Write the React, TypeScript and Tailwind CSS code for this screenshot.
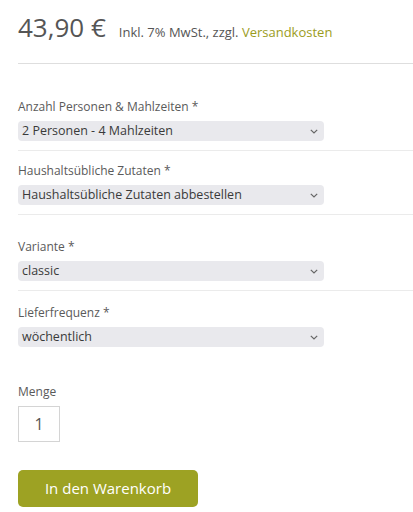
import React from "react";

type FieldProps = {
  label: string;
  value: string;
  pt: string;
  divider?: boolean;
};

const Chevron = () => (
  <svg width="8" height="5" viewBox="0 0 8 5" fill="none" className="shrink-0">
    <path d="M0.8 0.8l3.2 3.2 3.2-3.2" stroke="#666" strokeWidth="1.2" />
  </svg>
);

const SelectField = ({ label, value, pt, divider = true }: FieldProps) => {
  return (
    <div className={`${pt} ${divider ? "border-b border-[#ebebeb] pb-[9px]" : ""}`}>
      <div className="text-[12px] leading-[16px] text-[#5a5a5a]">{label}</div>
      <div className="mt-[6px] flex h-[20px] w-[306px] items-center justify-between rounded-[4px] bg-[#e9e9ed] pl-[4px] pr-[6px] text-[12.5px] text-[#3a3a3a]">
        <span>{value}</span>
        <Chevron />
      </div>
    </div>
  );
};

const App = () => {
  return (
    <div className="min-h-[512px] bg-white pl-[18px] pt-[11px] font-['Open_Sans',sans-serif]">
      <div className="flex items-baseline gap-[13px] border-b border-[#dedede] pb-[20px]">
        <span className="text-[26px] leading-[32px] text-[#555]">43,90 €</span>
        <span className="text-[13px] text-[#555]">
          Inkl. 7% MwSt., zzgl. <span className="text-[#9b9c1c]">Versandkosten</span>
        </span>
      </div>

      <SelectField pt="pt-[35px]" label="Anzahl Personen & Mahlzeiten *" value="2 Personen - 4 Mahlzeiten" />
      <SelectField pt="pt-[12px]" label="Haushaltsübliche Zutaten *" value="Haushaltsübliche Zutaten abbestellen" />
      <SelectField pt="pt-[24px]" label="Variante *" value="classic" />
      <SelectField pt="pt-[14px]" label="Lieferfrequenz *" value="wöchentlich" divider={false} />

      <div className="pt-[37px]">
        <div className="text-[12px] leading-[16px] text-[#5a5a5a]">Menge</div>
        <div className="mt-[6px] flex h-[36px] w-[42px] items-center justify-center border border-[#d4d4d4] text-[16px] text-[#555]">
          1
        </div>
      </div>

      <button className="mt-[28px] flex h-[37px] w-[180px] items-center justify-center rounded-[5px] bg-[#9da223] text-[15px] text-white">
        In den Warenkorb
      </button>
    </div>
  );
};

export default App;
